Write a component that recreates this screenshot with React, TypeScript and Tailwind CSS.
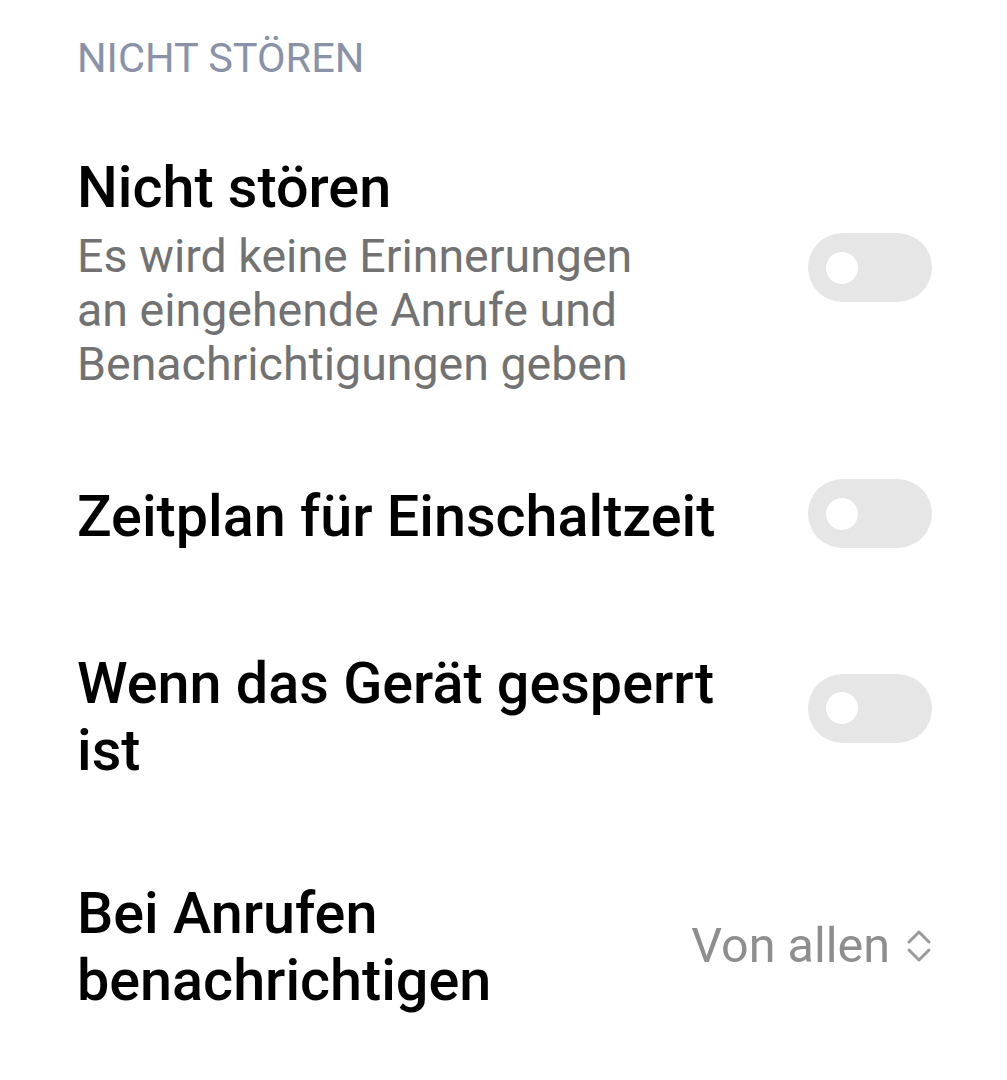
import React from "react";

function Toggle({ className = "" }: { className?: string }) {
  return (
    <div className={"flex h-[69px] w-[124px] shrink-0 items-center rounded-full bg-[#e6e6e6] pl-[18px] " + className}>
      <div className="h-[32px] w-[32px] rounded-full bg-white" />
    </div>
  );
}

function Chevrons() {
  return (
    <svg width="26" height="38" viewBox="0 0 26 38" fill="none" stroke="#9a9a9a" strokeWidth="3" strokeLinecap="round" strokeLinejoin="round">
      <path d="M3 15 L13 5 L23 15" />
      <path d="M3 23 L13 33 L23 23" />
    </svg>
  );
}

export default function App() {
  return (
    <div
      className="min-h-[1080px] w-full bg-white pl-[77px] pr-[75px] pt-[34px]"
      style={{ fontFamily: "Roboto, 'Noto Sans', Arial, sans-serif" }}
    >
      <div className="mb-[24px] text-[41.5px] leading-[48px] text-[#8a92a8]">NICHT STÖREN</div>

      <div className="flex flex-col">
        <div className="flex items-center justify-between pb-[40px] pt-[48px]">
          <div className="flex max-w-[660px] flex-col">
            <div className="text-[57.5px] font-medium leading-[67px] text-black">Nicht stören</div>
            <div className="mt-[8px] max-w-[600px] text-[46.5px] leading-[54px] text-[#727272]">
              Es wird keine Erinnerungen an eingehende Anrufe und Benachrichtigungen geben
            </div>
          </div>
          <Toggle className="mb-[10px]" />
        </div>

        <div className="flex items-center justify-between py-[48px]">
          <div className="max-w-[660px] text-[57.5px] font-medium leading-[67px] text-black">
            Zeitplan für Einschaltzeit
          </div>
          <Toggle className="mb-[6px]" />
        </div>

        <div className="flex items-center justify-between py-[48px]">
          <div className="max-w-[660px] text-[57.5px] font-medium leading-[67px] text-black">
            Wenn das Gerät gesperrt ist
          </div>
          <Toggle className="mb-[18px]" />
        </div>

        <div className="flex items-center justify-between gap-[40px] pb-[48px] pt-[48px]">
          <div className="max-w-[560px] text-[57.5px] font-medium leading-[67px] text-black">
            Bei Anrufen benachrichtigen
          </div>
          <div className="mb-[2px] flex items-center gap-[16px]">
            <span className="text-[48.5px] leading-[54px] text-[#8e8e8e]">Von allen</span>
            <Chevrons />
          </div>
        </div>
      </div>
    </div>
  );
}
